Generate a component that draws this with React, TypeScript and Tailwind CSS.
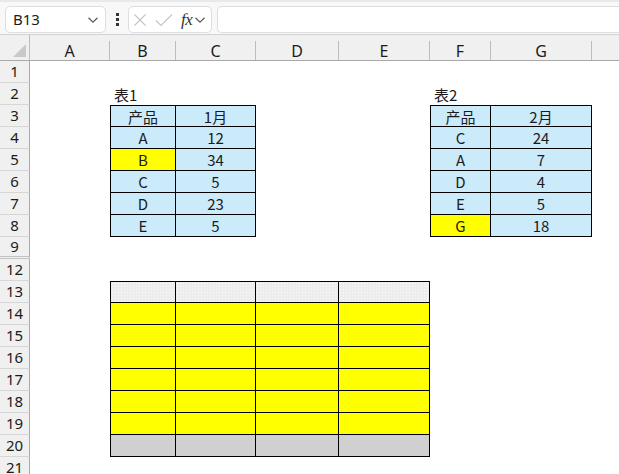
import React from "react";

const colLetters = ["A", "B", "C", "D", "E", "F", "G", "H"];
const rowNums = [1, 2, 3, 4, 5, 6, 7, 8, 9, 12, 13, 14, 15, 16, 17, 18, 19, 20, 21];

type Cell = { text?: string; cls?: string; left?: boolean };

const table1: Record<number, [string, string]> = {
  3: ["产品", "1月"],
  4: ["A", "12"],
  5: ["B", "34"],
  6: ["C", "5"],
  7: ["D", "23"],
  8: ["E", "5"],
};

const table2: Record<number, [string, string]> = {
  3: ["产品", "2月"],
  4: ["C", "24"],
  5: ["A", "7"],
  6: ["D", "4"],
  7: ["E", "5"],
  8: ["G", "18"],
};

function edge(first: boolean, top: boolean) {
  let s = "border-r border-b border-black";
  if (first) s += " border-l";
  if (top) s += " border-t";
  return s;
}

function getCell(row: number, col: number): Cell {
  if (row === 2 && col === 1) return { text: "表1", left: true };
  if (row === 2 && col === 5) return { text: "表2", left: true };

  if (table1[row] && (col === 1 || col === 2)) {
    const yellow = row === 5 && col === 1;
    return {
      text: table1[row][col - 1],
      cls: `${yellow ? "bg-[#ffff00]" : "bg-[#cbebfb]"} ${edge(col === 1, row === 3)}`,
    };
  }
  if (table2[row] && (col === 5 || col === 6)) {
    const yellow = row === 8 && col === 5;
    return {
      text: table2[row][col - 5],
      cls: `${yellow ? "bg-[#ffff00]" : "bg-[#cbebfb]"} ${edge(col === 5, row === 3)}`,
    };
  }
  if (row >= 13 && row <= 20 && col >= 1 && col <= 4) {
    let fill = "bg-[#ffff00]";
    if (row === 13)
      fill =
        "bg-[#ededed] bg-[radial-gradient(circle,#fafafa_0.6px,transparent_0.9px)] bg-[length:3px_3px]";
    if (row === 20) fill = "bg-[#d0d0d0]";
    return { cls: `${fill} ${edge(col === 1, row === 13)}` };
  }
  return {};
}

function Chevron() {
  return (
    <svg width="12" height="8" viewBox="0 0 12 8" fill="none">
      <path d="M1.5 1.8 6 6.2l4.5-4.4" stroke="#5a5a5a" strokeWidth="1.2" />
    </svg>
  );
}

export default function App() {
  return (
    <div className="w-[619px] h-[474px] overflow-hidden bg-white text-[#1b1b1b] font-['Noto_Sans','Noto_Sans_CJK_SC',sans-serif]">
      {/* FORMULA BAR */}
      <div className="h-[35px] bg-[#f8f8f8] border-b border-[#d2d2d2] flex flex-col">
        <div className="h-[2px] bg-[#e9e9e9]" />
        <div className="flex items-end h-[33px] pb-px">
          <div className="ml-[5px] w-[101px] h-[27px] bg-white border border-[#dedede] rounded-[5px] flex items-center pl-[7px] pr-[6px]">
            <span className="flex-1 text-[15px] leading-none">B13</span>
            <Chevron />
          </div>
          <div className="w-[22px] h-[27px] flex flex-col items-center justify-center gap-[2px]">
            <span className="w-[3px] h-[3px] bg-[#333]" />
            <span className="w-[3px] h-[3px] bg-[#333]" />
            <span className="w-[3px] h-[3px] bg-[#333]" />
          </div>
          <div className="w-[84px] h-[27px] bg-white border border-[#dedede] rounded-[5px] flex items-center pl-[4px] gap-[6px]">
            <svg width="14" height="14" viewBox="0 0 14 14" fill="none">
              <path d="M1.5 1.5l11 11M12.5 1.5l-11 11" stroke="#c4c4c4" strokeWidth="1.1" />
            </svg>
            <svg width="18" height="14" viewBox="0 0 18 14" fill="none" className="ml-[2px]">
              <path d="M1 7.5l5 5L17 1.5" stroke="#c4c4c4" strokeWidth="1.1" />
            </svg>
            <span className="ml-[2px] text-[17px] italic leading-none text-[#333] font-['Liberation_Serif',serif] tracking-[-0.5px]">
              fx
            </span>
            <div className="-ml-[4px]">
              <Chevron />
            </div>
          </div>
          <div className="ml-[5px] flex-1 h-[27px] bg-white border border-[#dedede] rounded-l-[5px] border-r-0" />
        </div>
      </div>

      {/* COLUMN HEADERS */}
      <div className="grid grid-cols-[30px_80px_66px_80px_83px_91px_61px_101px_100px] h-[26px] bg-[#f0f0f0] border-b border-[#a9a9a9]">
        <div className="flex items-end justify-end pr-[3px] pb-[3px] border-r border-[#bdbdbd]">
          <svg width="13" height="13" viewBox="0 0 13 13">
            <path d="M13 0V13H0Z" fill="#c9c9c9" />
          </svg>
        </div>
        {colLetters.slice(0, 7).map((c) => (
          <div key={c} className="flex">
            <span className="flex-1 text-center text-[16px] leading-none pt-[8px]">{c}</span>
            <span className="w-px h-[19px] self-end bg-[#bdbdbd]" />
          </div>
        ))}
        <div />
      </div>

      {/* SHEET */}
      <div className="grid grid-cols-[30px_80px_66px_80px_83px_91px_61px_101px_100px]">
        {rowNums.map((r) => (
          <React.Fragment key={r}>
            <div
              className={`h-[22px] bg-[#f0f0f0] border-r border-[#a9a9a9] flex items-center justify-center text-[15px] ${
                r === 9 ? "border-b-[3px] border-b-[#c2c2c2] border-double" : "border-b border-b-[#d6d6d6]"
              }`}
            >
              {r}
            </div>
            {colLetters.map((c, i) => {
              const cell = getCell(r, i);
              return (
                <div
                  key={c}
                  className={`h-[22px] flex items-center text-[15px] leading-none font-['Noto_Sans_CJK_SC',sans-serif] ${
                    cell.left ? "justify-start pl-[4px]" : "justify-center"
                  } ${cell.cls ?? ""}`}
                >
                  {cell.text}
                </div>
              );
            })}
          </React.Fragment>
        ))}
      </div>
    </div>
  );
}
